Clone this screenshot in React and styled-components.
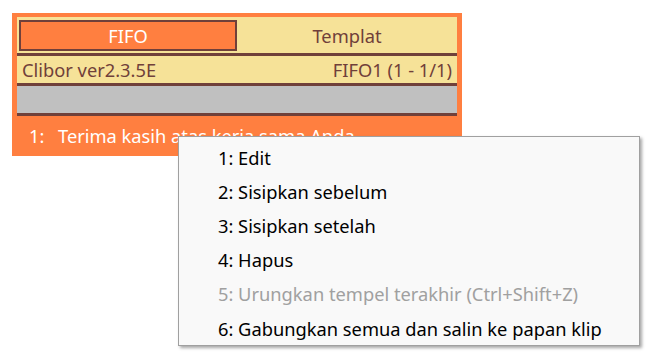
import React from "react";
import styled, { createGlobalStyle } from "styled-components";

const ORANGE = "#ff7f40";
const YELLOW = "#f6e298";
const BROWN = "#70403a";
const GRAY = "#c0c0c0";
const FONT = `"Noto Sans", "Open Sans", sans-serif`;
const SIZE = "18.3px";

const Global = createGlobalStyle`
  html, body { margin: 0; padding: 0; background: #ffffff; }
  body { font-family: ${FONT}; }
`;

const Page = styled.div`
  position: relative;
  width: 653px;
  height: 363px;
  padding: 13px 0 0 12px;
  box-sizing: border-box;
  overflow: hidden;
`;

const Panel = styled.div`
  width: 450px;
  height: 143px;
  box-sizing: border-box;
  background: ${ORANGE};
  padding: 4px 5px 0 5px;
  display: flex;
  flex-direction: column;
`;

const TabBar = styled.div`
  height: 36px;
  box-sizing: border-box;
  background: ${YELLOW};
  padding: 3px 0 2px 2px;
  display: grid;
  grid-template-columns: 218px 1fr;
`;

const Tab = styled.div`
  display: flex;
  align-items: center;
  justify-content: center;
  box-sizing: border-box;
  font-size: ${SIZE};
  color: ${(p) => (p.$active ? "#ffffff" : BROWN)};
  background: ${(p) => (p.$active ? ORANGE : "transparent")};
  border: 2px solid ${(p) => (p.$active ? BROWN : "transparent")};
`;

const Divider = styled.div`
  height: 3px;
  background: ${BROWN};
`;

const StatusRow = styled.div`
  height: 27px;
  background: ${YELLOW};
  color: ${BROWN};
  font-size: ${SIZE};
  display: flex;
  align-items: center;
  justify-content: space-between;
  padding: 0 5px;
`;

const BlankRow = styled.div`
  height: 27px;
  background: ${GRAY};
`;

const ListRow = styled.div`
  height: 38px;
  display: flex;
  align-items: center;
  color: #ffffff;
  font-size: ${SIZE};
  padding-left: 12px;
`;

const Index = styled.span`
  width: 29px;
`;

const Menu = styled.ul`
  position: absolute;
  left: 178px;
  top: 136px;
  width: 462px;
  height: 210px;
  box-sizing: border-box;
  margin: 0;
  padding: 3px 0;
  list-style: none;
  background: #f9f9f9;
  border: 1px solid #a0a0a0;
  box-shadow: 2px 2px 3px rgba(0, 0, 0, 0.35);
`;

const MenuItem = styled.li`
  height: 34.2px;
  display: flex;
  align-items: center;
  padding-left: 39px;
  font-size: ${SIZE};
  color: ${(p) => (p.$disabled ? "#a0a0a0" : "#000000")};
  white-space: nowrap;
`;

const items = [
  { label: "1: Edit" },
  { label: "2: Sisipkan sebelum" },
  { label: "3: Sisipkan setelah" },
  { label: "4: Hapus" },
  { label: "5: Urungkan tempel terakhir (Ctrl+Shift+Z)", disabled: true },
  { label: "6: Gabungkan semua dan salin ke papan klip" },
];

export default function App() {
  return (
    <>
      <Global />
      <Page>
        <Panel>
          <TabBar>
            <Tab $active>FIFO</Tab>
            <Tab>Templat</Tab>
          </TabBar>
          <Divider />
          <StatusRow>
            <span>Clibor ver2.3.5E</span>
            <span>FIFO1 (1 - 1/1)</span>
          </StatusRow>
          <Divider />
          <BlankRow />
          <Divider />
          <ListRow>
            <Index>1:</Index>
            <span>Terima kasih atas kerja sama Anda</span>
          </ListRow>
        </Panel>
        <Menu>
          {items.map((it) => (
            <MenuItem key={it.label} $disabled={it.disabled}>
              {it.label}
            </MenuItem>
          ))}
        </Menu>
      </Page>
    </>
  );
}
